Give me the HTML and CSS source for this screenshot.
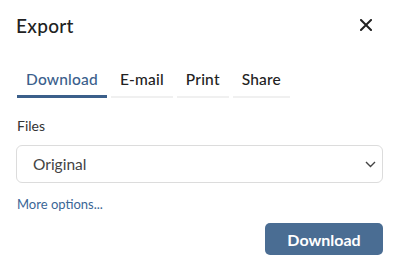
FILE: index.html
```html
<!DOCTYPE html>
<html>
<head>
<meta charset="utf-8">
<link rel="stylesheet" href="styles.css">
</head>
<body>
<div class="dialog">
  <div class="header">
    <h1 class="title">Export</h1>
    <button class="close" aria-label="Close">
      <svg width="12" height="12" viewBox="0 0 12 12"><path d="M1 1L11 11M11 1L1 11" stroke="#222" stroke-width="2" stroke-linecap="square"/></svg>
    </button>
  </div>
  <div class="tabs">
    <div class="tab active">Download</div>
    <div class="tab">E-mail</div>
    <div class="tab">Print</div>
    <div class="tab">Share</div>
  </div>
  <div class="label">Files</div>
  <div class="select">
    <span>Original</span>
    <svg width="11" height="7" viewBox="0 0 11 7"><path d="M1 1L5.5 5.5L10 1" fill="none" stroke="#444" stroke-width="1.4"/></svg>
  </div>
  <a class="more">More options...</a>
  <div class="footer">
    <button class="primary">Download</button>
  </div>
</div>
</body>
</html>
```
FILE: styles.css
```css
* { box-sizing: border-box; }
body { margin: 0; background: #fff; font-family: Lato, "Open Sans", sans-serif; }
.dialog { width: 400px; height: 269px; padding: 0 17px 0 16px; display: flex; flex-direction: column; }
.header { display: flex; justify-content: space-between; align-items: center; height: 50px; padding-top: 0; }
.title { margin: 0; font-size: 19px; font-weight: 500; color: #222; letter-spacing: 0.3px; }
.close { border: 0; background: none; padding: 0; margin-right: 11px; width: 12px; height: 12px; display: flex; }
.tabs { display: flex; gap: 4px; margin-top: 16px; margin-left: 1px; }
.tab { font-size: 15.5px; color: #222; padding: 4px 9px 7px 9px; border-bottom: 2px solid #f0f0f0; font-weight: 500; letter-spacing: 0.2px; }
.tab.active { color: #3b5f8c; border-bottom: 3px solid #3b5f8a; }
.label { margin-top: 19px; margin-left: 1px; font-size: 14px; color: #333; }
.select { margin-top: 11px; height: 38px; border: 1px solid #dcdcdc; border-radius: 6px; display: flex; align-items: center; justify-content: space-between; padding: 0 6px 0 16px; font-size: 15.5px; color: #444; }
.more { margin-top: 13px; margin-left: 1px; font-size: 13px; color: #3b6696; }
.footer { display: flex; justify-content: flex-end; margin-top: 11px; }
.primary { width: 118px; height: 32px; border: 0; border-radius: 5px; background: #4a6d93; color: #fff; font-family: Lato, sans-serif; font-weight: 700; font-size: 16px; }
```
